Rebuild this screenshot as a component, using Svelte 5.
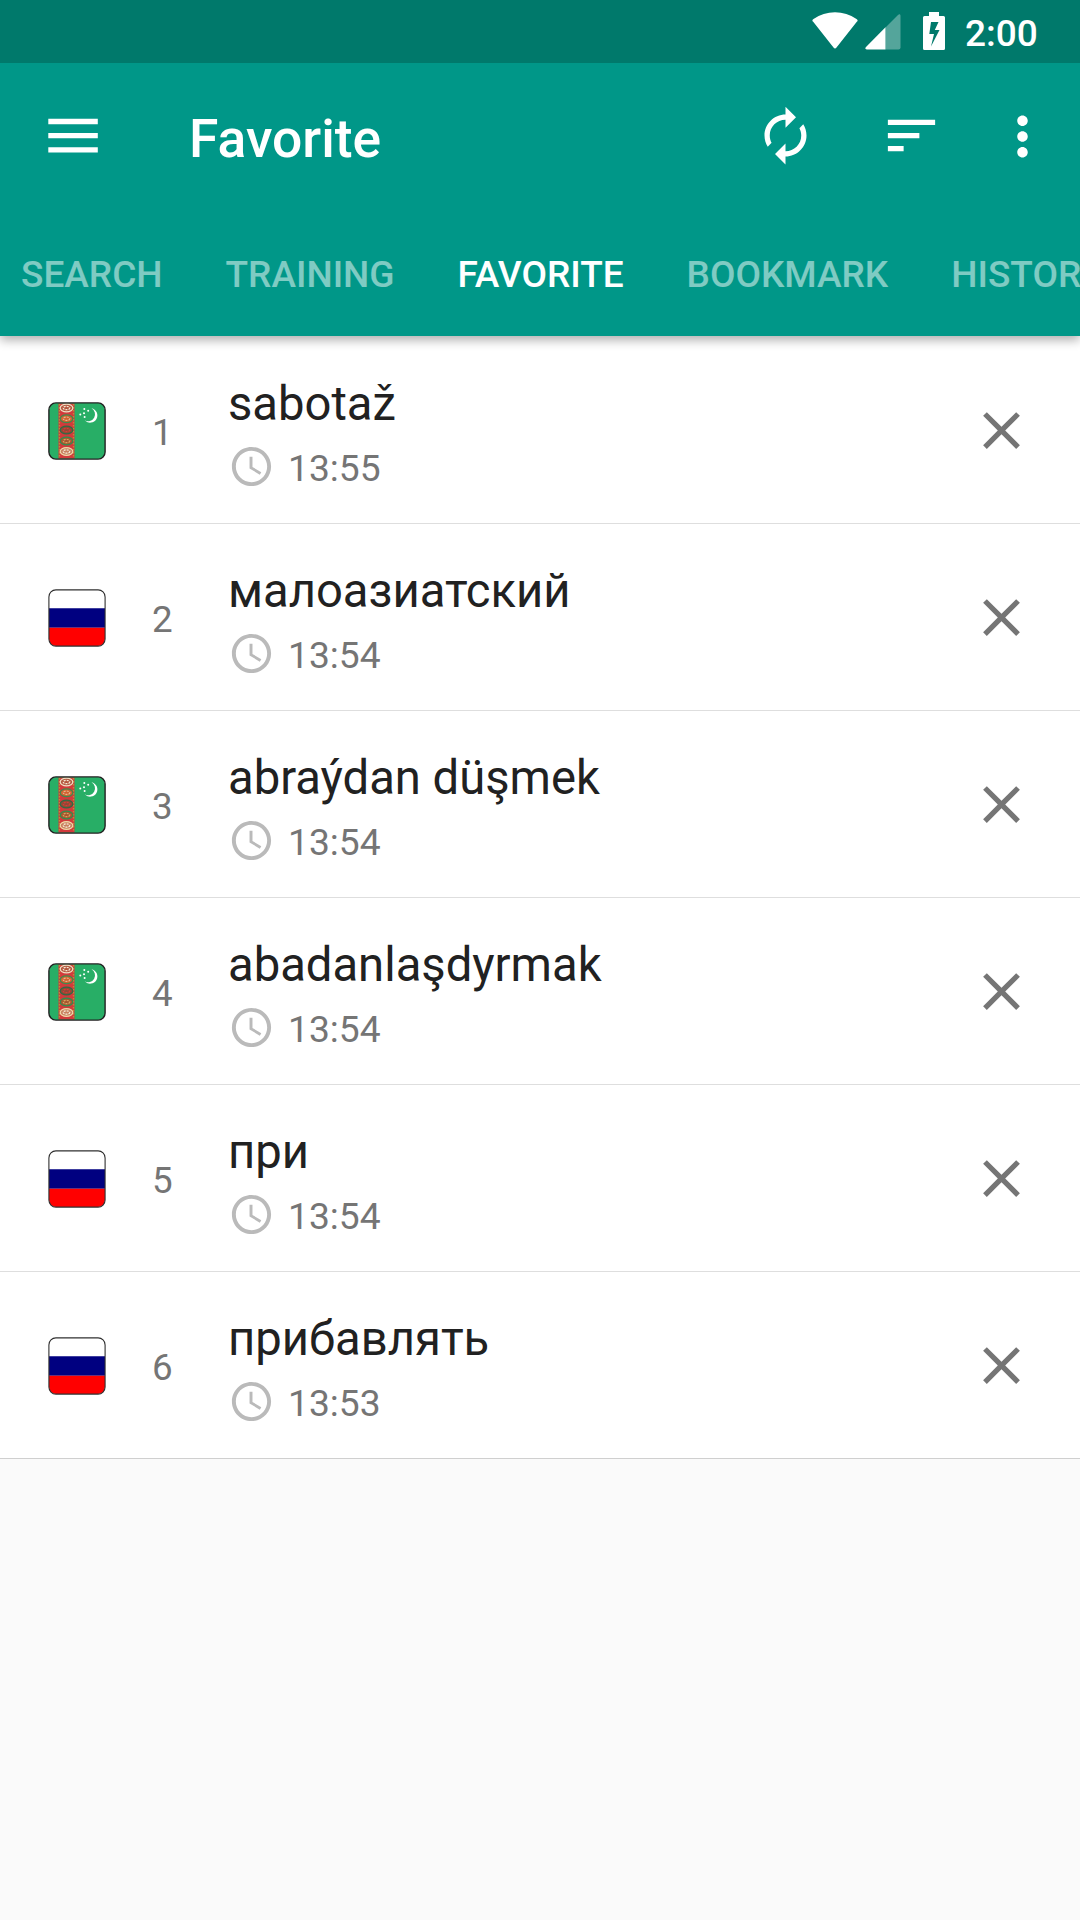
<script>
  const tabs = ["Search", "Training", "Favorite", "Bookmark", "History"];
  const activeTab = "Favorite";

  // carpet medallions on the Turkmen flag, top to bottom
  const guls = [
    { y: 6, ring: "#efe0c4", fill: "#b5573f", mark: "#f4ead6" },
    { y: 16.7, ring: "#3f8a4c", fill: "#d2602f", mark: "#e5b98c" },
    { y: 28, ring: "#2f6b45", fill: "#8e4a35", mark: "#d83a36" },
    { y: 39, ring: "#2f8f4f", fill: "#a5562f", mark: "#d9a45f" },
    { y: 49.5, ring: "#efd9a8", fill: "#c9805f", mark: "#f7eedc" },
  ];

  let items = $state([
    { id: 1, lang: "tk", word: "sabotaž", time: "13:55" },
    { id: 2, lang: "ru", word: "малоазиатский", time: "13:54" },
    { id: 3, lang: "tk", word: "abraýdan düşmek", time: "13:54" },
    { id: 4, lang: "tk", word: "abadanlaşdyrmak", time: "13:54" },
    { id: 5, lang: "ru", word: "при", time: "13:54" },
    { id: 6, lang: "ru", word: "прибавлять", time: "13:53" },
  ]);

  function remove(id) {
    items = items.filter((item) => item.id !== id);
  }
</script>

{#snippet turkmenFlag()}
  <svg class="flag" viewBox="0 0 58 58">
    <rect x="1" y="1" width="56" height="56" rx="7" fill="#28ae66" />
    <rect x="10.5" y="1.5" width="16" height="55" fill="#d23a3c" />
    <path d="M11.500 2v54M25.500 2v54" stroke="#c58a35" stroke-width="1.300" stroke-dasharray="1.500 1.500" />
    {#each guls as gul}
      <ellipse cx="18.500" cy={gul.y} rx="6.300" ry="3.900" fill={gul.fill} stroke={gul.ring} stroke-width="1.200" />
      <ellipse cx="18.500" cy={gul.y} rx="3.300" ry="1.700" fill="none" stroke={gul.mark} stroke-width="1.200" stroke-dasharray="2 1" />
    {/each}
    <path d="M43.500 6.200a7.300 7.300 0 1 1-6.800 12.100a6.600 6.600 0 0 0 6.800-12.100z" fill="#fff" />
    <g fill="#fff">
      <circle cx="36.300" cy="7" r="1" />
      <circle cx="40.200" cy="8.800" r="1" />
      <circle cx="36" cy="11.300" r="1" />
      <circle cx="32.300" cy="12.600" r="1" />
      <circle cx="36.600" cy="15" r="1" />
    </g>
    <rect x=".9" y=".9" width="56.200" height="56.200" rx="7" fill="none" stroke="#202020" stroke-width="1.400" />
  </svg>
{/snippet}

{#snippet russianFlag()}
  <svg class="flag" viewBox="0 0 58 58">
    <rect x="1" y="1" width="56" height="56" rx="7" fill="#fff" />
    <path d="M1 19.300h56v19.400H1z" fill="#000080" />
    <path d="M1 38.700h56V50a7 7 0 0 1-7 7H8a7 7 0 0 1-7-7z" fill="#f00" />
    <rect x=".9" y=".9" width="56.200" height="56.200" rx="7" fill="none" stroke="#303030" stroke-width="1.100" />
  </svg>
{/snippet}

<div class="screen">
  <header>
    <div class="status-bar">
      <svg class="wifi" viewBox="0 0 46 37">
        <path d="M1.200 9.800C-.1 8.600.2 7.900 1.500 7a37.500 37.500 0 0 1 43 0c1.300.9 1.600 1.600.3 2.800L24.500 35.500c-1 1.200-2 1.200-3 0z" fill="#fff" />
      </svg>
      <svg class="signal" viewBox="0 0 36 36">
        <path d="M20.500 13.500 33 1c1.500-1.500 2.500-.6 2.500.8V33.500a2 2 0 0 1-2 2h-13z" fill="#fff" opacity=".33" />
        <path d="M20.500 13.300V35.500H1.800C.3 35.500-.2 34.200 1 33z" fill="#fff" />
      </svg>
      <svg class="battery" viewBox="0 0 22 38">
        <path fill-rule="evenodd" d="M6 0h10v4h4.500q1.500 0 1.500 1.500v31q0 1.500-1.500 1.500h-19Q0 38 0 36.500v-31Q0 4 1.500 4H6zM8 10 6.300 22H11L8 34.500 16.500 18h-4.700l3.700-8z" fill="#fff" />
      </svg>
      <span class="clock">2:00</span>
    </div>

    <div class="toolbar">
      <button class="menu" aria-label="Menu">
        <svg width="50" height="36" viewBox="0 0 50 36">
          <path d="M.3 3.500h49.500M.3 17.700h49.500M.3 31.900h49.500" stroke="#fff" stroke-width="5.300" />
        </svg>
      </button>
      <h1>Favorite</h1>
      <button class="sync" aria-label="Refresh">
        <svg width="63" height="63" viewBox="0 0 24 24">
          <path fill="#fff" d="M12 6v3l4-4-4-4v3c-4.420 0-8 3.580-8 8 0 1.570.46 3.030 1.240 4.260L6.700 14.800c-.45-.83-.7-1.790-.7-2.800 0-3.310 2.690-6 6-6zm6.760 1.740L17.300 9.200c.44.840.7 1.790.7 2.800 0 3.310-2.690 6-6 6v-3l-4 4 4 4v-3c4.420 0 8-3.580 8-8 0-1.570-.46-3.030-1.240-4.260z" />
        </svg>
      </button>
      <button class="sort" aria-label="Sort">
        <svg width="63" height="63" viewBox="0 0 24 24">
          <path fill="#fff" d="M3 18h6v-2H3v2zM3 6v2h18V6H3zm0 7h12v-2H3v2z" />
        </svg>
      </button>
      <button class="more" aria-label="More options">
        <svg width="63" height="63" viewBox="0 0 24 24">
          <path fill="#fff" d="M12 8c1.100 0 2-.9 2-2s-.9-2-2-2-2 .9-2 2 .9 2 2 2zm0 2c-1.100 0-2 .9-2 2s.9 2 2 2 2-.9 2-2-.9-2-2-2zm0 6c-1.100 0-2 .9-2 2s.9 2 2 2 2-.9 2-2-.9-2-2-2z" />
        </svg>
      </button>
    </div>

    <nav>
      {#each tabs as tab}
        <span class="tab" class:active={tab === activeTab}>{tab}</span>
      {/each}
    </nav>
  </header>

  <ul>
    {#each items as item (item.id)}
      <li>
        {#if item.lang === "tk"}
          {@render turkmenFlag()}
        {:else}
          {@render russianFlag()}
        {/if}
        <span class="number">{item.id}</span>
        <div class="entry">
          <span class="word">{item.word}</span>
          <div class="time">
            <svg width="47" height="47" viewBox="0 0 24 24">
              <path fill="#bababa" d="M11.990 2C6.470 2 2 6.480 2 12s4.470 10 9.990 10C17.520 22 22 17.520 22 12S17.520 2 11.990 2zM12 20c-4.420 0-8-3.580-8-8s3.580-8 8-8 8 3.580 8 8-3.580 8-8 8zm.5-13H11v6l5.250 3.150.75-1.230-4.500-2.670z" />
            </svg>
            <span>{item.time}</span>
          </div>
        </div>
        <button class="remove" aria-label="Remove" onclick={() => remove(item.id)}>
          <svg width="63" height="63" viewBox="0 0 24 24">
            <path fill="#757575" d="M19 6.410L17.590 5 12 10.590 6.410 5 5 6.410 10.590 12 5 17.590 6.410 19 12 13.410 17.590 19 19 17.590 13.410 12z" />
          </svg>
        </button>
      </li>
    {/each}
  </ul>
</div>

<style>
  :global(body) {
    background: #fafafa;
  }
  .screen {
    width: 1080px;
    height: 1920px;
    overflow: hidden;
    background: #fafafa;
    font-family: Roboto, sans-serif;
  }
  svg {
    display: block;
    flex: none;
  }
  button {
    padding: 0;
    border: none;
    background: none;
    cursor: pointer;
  }
  header {
    position: relative;
    background: #009788;
    color: #fff;
    box-shadow: 0 4px 10px rgba(0, 0, 0, 0.32);
  }
  .status-bar {
    display: flex;
    height: 63px;
    padding-left: 812px;
    background: #00796b;
  }
  .wifi {
    width: 46px;
    height: 37px;
    margin-top: 12px;
  }
  .signal {
    width: 36px;
    height: 36px;
    margin: 14px 0 0 7px;
  }
  .battery {
    width: 22px;
    height: 38px;
    margin: 12px 0 0 22px;
  }
  .clock {
    margin-left: 20px;
    font-size: 37px;
    font-weight: 500;
    line-height: 68px;
  }
  .toolbar {
    display: flex;
    align-items: center;
    height: 147px;
  }
  .menu {
    margin: 0 0 1px 48px;
  }
  h1 {
    flex: 1;
    margin: 5px 0 0 91px;
    font-size: 53.4px;
    font-weight: 500;
    line-height: 62px;
  }
  .sync,
  .sort {
    margin-bottom: 2px;
  }
  .sort {
    margin-left: 63px;
  }
  .more {
    margin: 0 26px 0 48px;
  }
  nav {
    display: flex;
    gap: 63px;
    height: 126px;
    padding-left: 21px;
    overflow: hidden;
  }
  .tab {
    flex: none;
    color: rgba(255, 255, 255, 0.5);
    font-size: 37px;
    font-weight: 500;
    line-height: 129px;
    text-transform: uppercase;
  }
  .tab.active {
    color: #fff;
  }
  ul {
    margin: 0;
    padding: 1px 0 0;
    list-style: none;
    background: #fff;
  }
  li {
    display: flex;
    align-items: center;
    box-sizing: border-box;
    height: 187px;
    padding: 0 47px;
    border-bottom: 1px solid #dedede;
  }
  li:last-child {
    border-bottom-color: #cfcfcf;
  }
  .flag {
    width: 58px;
    height: 58px;
    margin: 2px 1px 0 1px;
  }
  .number {
    width: 76px;
    margin: 4px 0 0 45px;
    color: #757575;
    font-size: 36.75px;
  }
  .entry {
    flex: 1;
    padding-top: 6px;
  }
  .word {
    display: block;
    color: #212121;
    font-size: 47.2px;
    line-height: 56px;
  }
  .time {
    display: flex;
    align-items: center;
    gap: 13px;
    margin-top: 11px;
    color: #757575;
    font-size: 37.2px;
    line-height: 44px;
  }
  .time span {
    margin-top: 2px;
  }
</style>
